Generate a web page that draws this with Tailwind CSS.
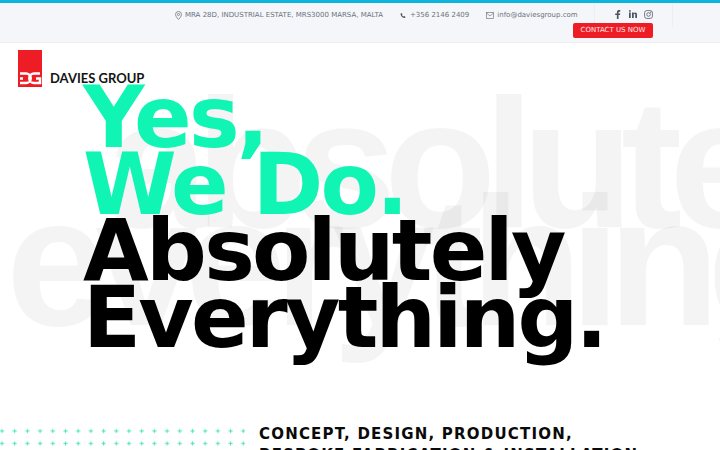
<!DOCTYPE html>
<html lang="en">
<head>
<meta charset="UTF-8">
<title>Davies Group</title>
<script src="https://cdn.jsdelivr.net/npm/@tailwindcss/browser@4"></script>
</head>
<body class="bg-white font-['DejaVu_Sans',sans-serif] overflow-hidden h-[450px] w-[720px]">
  <header class="h-[43px] bg-[#f4f6f9] border-t-[3px] border-t-[#0bb5dc] border-b border-b-[#eceef1] flex relative">
    <div class="flex items-start pt-[7px] text-[7px] leading-[10px] text-[#6b7280]">
      <span class="flex items-center gap-[3px] ml-[175px]">
        <svg class="w-[7px] h-[9px]" viewBox="0 0 14 18" fill="none" stroke="#6b7280" stroke-width="1.5"><path d="M7 1a6 6 0 0 0-6 6c0 4 6 10 6 10s6-6 6-10a6 6 0 0 0-6-6z"/><circle cx="7" cy="7" r="2.2"/></svg>
        MRA 28D, INDUSTRIAL ESTATE, MRS3000 MARSA, MALTA
      </span>
      <span class="flex items-center gap-[4px] ml-[17px]">
        <svg class="w-[6px] h-[7px]" viewBox="0 0 24 24" fill="#4b5563"><path d="M6 2l4 5-2 3c1 3 3 5 6 6l3-2 5 4-2 4C10 22 2 14 2 5z"/></svg>
        +356 2146 2409
      </span>
      <span class="flex items-center gap-[3px] ml-[17px]">
        <svg class="w-[8px] h-[7px]" viewBox="0 0 16 14" fill="none" stroke="#6b7280" stroke-width="1.3"><rect x="1" y="1" width="14" height="12"/><path d="M1 2l7 6 7-6"/></svg>
        info@daviesgroup.com
      </span>
    </div>
    <div class="absolute left-[594px] top-0 h-[24px] w-[79px] border-x border-[#eceef1] flex items-center pl-[20px] pb-[2px] gap-[8px]">
      <svg class="w-[6px] h-[9px]" viewBox="0 0 10 16" fill="#4b5563"><path d="M3 16V9H0V6h3V4c0-3 2-4 4-4h2v3H7.500C6.500 3 6 3.500 6 4.500V6h3l-.5 3H6v7z"/></svg>
      <svg class="w-[8px] h-[8px]" viewBox="0 0 16 16" fill="#4b5563"><rect x="0" y="5" width="3.500" height="11"/><circle cx="1.800" cy="1.800" r="1.800"/><path d="M6 5h3.300v1.600C10 5.500 11 4.800 12.500 4.800c2.500 0 3.500 1.500 3.500 4.200v7h-3.500V9.500c0-1.300-.5-2-1.500-2s-1.500.8-1.500 2V16H6z"/></svg>
      <svg class="w-[9px] h-[9px] -ml-[1px]" viewBox="0 0 16 16" fill="none" stroke="#4b5563" stroke-width="1.300"><rect x="1" y="1" width="14" height="14" rx="4"/><circle cx="8" cy="8" r="3.200"/><circle cx="12" cy="4" r=".6"/></svg>
    </div>
    <a class="absolute left-[573px] top-[20px] h-[15px] w-[80px] bg-[#ee1c25] rounded-[2px] text-white/90 text-[7px] flex items-center justify-center">CONTACT US NOW</a>
  </header>

  <main class="relative h-[407px] overflow-hidden">
    <div class="absolute left-0 top-[71px] font-['Liberation_Sans',sans-serif] font-bold text-[184px] leading-[98px] tracking-[-13px] text-black/[0.045] whitespace-nowrap">
      <div class="ml-[106px]">absolutely</div>
      <div class="ml-[6px]">everything</div>
    </div>

    <div class="absolute left-[18px] top-[7px] flex items-end gap-[8px]">
      <svg class="w-[24px] h-[37px]" viewBox="0 0 24 37"><rect width="24" height="37" fill="#ee1c25"/><path d="M2 23.500h6a4.500 4.500 0 0 1 0 9.500H2M2 28.500h3M22 23.500h-6a4.500 4.500 0 0 0 0 9.500h6v-4.500h-4" fill="none" stroke="#fff" stroke-width="2.500"/></svg>
      <span class="mb-[2px] text-[13px] leading-[13px] font-bold text-[#141414] font-['Lato',sans-serif]">DAVIES GROUP</span>
    </div>

    <h1 class="absolute left-[83px] top-[42px] font-bold text-[85px] leading-[66.6px] tracking-[-2.75px] text-[#10f5b4]">
      Yes,<br>We Do.<br><span class="text-black">Absolutely<br>Everything.</span>
    </h1>

    <!-- plus grid, two rows visible above the fold -->
    <svg class="absolute left-0 top-[384px] w-[245px] h-[23px]" viewBox="0 0 245 23">
      <defs>
        <pattern id="plus" x="-0.5" y="1.500" width="12.7" height="12.4" patternUnits="userSpaceOnUse">
          <path d="M2.500 .5v4M.5 2.500h4" stroke="#4fe3bd" stroke-width="1"/>
        </pattern>
      </defs>
      <rect width="245" height="23" fill="url(#plus)"/>
    </svg>

    <p class="absolute left-[259px] top-[381px] font-bold text-[15px] leading-[21px] tracking-[1.2px] text-[#0a0a0a] whitespace-nowrap">CONCEPT, DESIGN, PRODUCTION,<br>BESPOKE FABRICATION &amp; INSTALLATION</p>
  </main>
</body>
</html>
